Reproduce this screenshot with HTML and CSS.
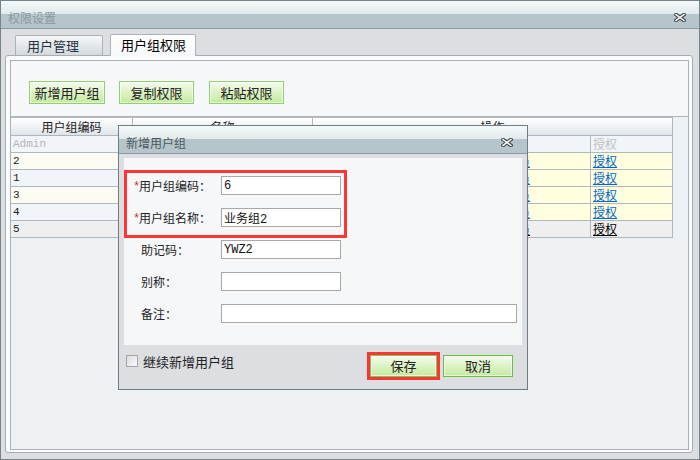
FILE: index.html
```html
<!DOCTYPE html>
<html lang="zh-CN">
<head>
<meta charset="utf-8">
<title>权限设置</title>
<link rel="stylesheet" href="styles.css">
</head>
<body>
<div class="window">
  <div class="titlebar">
    <span class="title">权限设置</span>
    <svg class="close" width="12" height="9" viewBox="0 0 12 9"><path d="M2 1.5 L10 7.5 M10 1.5 L2 7.5" stroke="#3e474b" stroke-width="3.6" stroke-linecap="square"/><path d="M2 1.5 L10 7.5 M10 1.5 L2 7.5" stroke="#ffffff" stroke-width="1.5" stroke-linecap="square"/></svg>
  </div>
  <div class="tabs">
    <div class="tab">用户管理</div>
    <div class="tab active">用户组权限</div>
  </div>
  <div class="panel">
    <div class="inner">
      <div class="toolbar">
        <div class="btn b1">新增用户组</div>
        <div class="btn b2">复制权限</div>
        <div class="btn b3">粘贴权限</div>
      </div>
      <div class="grid">
        <div class="hd">用户组编码</div>
        <div class="hd">名称</div>
        <div class="hd span2">操作</div>

        <div class="c code blue dim">Admin</div>
        <div class="c blue"></div>
        <div class="c blue"></div>
        <div class="c blue"><span class="dimlink">授权</span></div>

        <div class="c code cream">2</div>
        <div class="c yel"></div>
        <div class="c yel op"><a class="lk">成员</a></div>
        <div class="c yel"><a class="lk">授权</a></div>

        <div class="c code blue">1</div>
        <div class="c yel"></div>
        <div class="c yel op"><a class="lk">成员</a></div>
        <div class="c yel"><a class="lk">授权</a></div>

        <div class="c code cream">3</div>
        <div class="c yel"></div>
        <div class="c yel op"><a class="lk">成员</a></div>
        <div class="c yel"><a class="lk">授权</a></div>

        <div class="c code blue">4</div>
        <div class="c yel"></div>
        <div class="c yel op"><a class="lk">成员</a></div>
        <div class="c yel"><a class="lk">授权</a></div>

        <div class="c code gray">5</div>
        <div class="c gray"></div>
        <div class="c gray op"><a class="lk black">成员</a></div>
        <div class="c gray"><a class="lk black">授权</a></div>
      </div>
    </div>
  </div>

  <div class="dialog">
    <div class="dtitle">
      <span class="dtext">新增用户组</span>
      <svg class="close" width="12" height="9" viewBox="0 0 12 9"><path d="M2 1.5 L10 7.5 M10 1.5 L2 7.5" stroke="#3e474b" stroke-width="3.6" stroke-linecap="square"/><path d="M2 1.5 L10 7.5 M10 1.5 L2 7.5" stroke="#ffffff" stroke-width="1.5" stroke-linecap="square"/></svg>
    </div>
    <div class="dbody">
      <div class="form">
        <div class="redbox">
          <div class="row req"><span class="star">*</span><span class="lbl">用户组编码：</span><input class="ipt" value="6"></div>
          <div class="row req"><span class="star">*</span><span class="lbl">用户组名称：</span><input class="ipt" value="业务组2"></div>
        </div>
        <div class="row plain first"><span class="lbl">助记码：</span><input class="ipt" value="YWZ2"></div>
        <div class="row plain"><span class="lbl">别称：</span><input class="ipt" value=""></div>
        <div class="row plain"><span class="lbl">备注：</span><input class="ipt wide" value=""></div>
      </div>
      <div class="footer">
        <div class="chk"><span class="box"></span><span>继续新增用户组</span></div>
        <div class="redframe"><div class="btn dbtn">保存</div></div>
        <div class="btn dbtn cancel">取消</div>
      </div>
    </div>
  </div>
</div>
</body>
</html>
```

FILE: styles.css
```css
* { box-sizing: border-box; }
html, body { margin: 0; padding: 0; background: #dcdee2; }
body { width: 700px; height: 460px; overflow: hidden;
  font-family: "Noto Sans CJK SC", "Liberation Sans", sans-serif; font-size: 12px; color: #222; }

.window { position: relative; width: 700px; height: 460px; border: 1px solid #748489;
  background: #dcdee2; display: flex; flex-direction: column; }

.titlebar { height: 28px; flex: none; display: flex; align-items: center; justify-content: space-between;
  padding: 6px 13px 0 7px; border-bottom: 1px solid #8a9ba0;
  background: linear-gradient(#f6f9fa 0%, #e0e9ec 48%, #b5c5cb 50%, #b5c5cb 100%); }
.title { color: #8b989c; font-size: 12px; line-height: 14px; }
.close { display: block; }

.tabs { height: 26px; flex: none; display: flex; align-items: flex-end; padding-left: 14px; }
.tab { height: 20px; width: 88px; border: 1px solid #a9b3b8; border-bottom: none; border-radius: 2px 2px 0 0;
  padding: 0 11px; line-height: 19px; font-size: 13px; color: #1f3344; white-space: nowrap;
  background: linear-gradient(#f5f7f8, #d3d9dd); }
.tab.active { height: 22px; width: 86px; margin-left: 7px; margin-bottom: -1px; padding: 0 0 0 10px;
  line-height: 20px; color: #000; background: linear-gradient(#ffffff, #f7f8fa); position: relative; z-index: 1; }

.panel { margin-left: 4px; width: 688px; height: 398px; flex: none; border: 1px solid #a5aeb3; border-radius: 3px;
  background: #fafbfc; padding: 4px 3px 2px 4px; }
.inner { height: 100%; border: 1px solid #a9b1b7; background: #eef1f4; display: flex; flex-direction: column; }

.toolbar { height: 56px; flex: none; background: #f6f7f9; border-bottom: 1px solid #adb5bb;
  display: flex; align-items: flex-start; padding: 20px 0 0 18px; }
.btn { height: 23px; border: 1px solid #92cf6e; text-align: center; line-height: 21px; font-size: 13px; color: #222;
  white-space: nowrap; background: linear-gradient(#f4fbec, #c4ea9e); box-shadow: inset 0 0 0 1px rgba(255,255,255,0.55); }
.b1 { width: 76px; }
.b2 { width: 75px; margin-left: 14px; }
.b3 { width: 75px; margin-left: 15px; }

.grid { display: grid; grid-template-columns: 122px 180px 278px 82px; width: 662px; }
.hd { height: 19px; border-top: 1px solid #b3bac1; border-bottom: 1px solid #adb5bd; border-right: 1px solid #adb5bd;
  background: linear-gradient(#ffffff, #e0e4e8); text-align: center; line-height: 17px; font-size: 12px; color: #222; }
.span2 { grid-column: span 2; }
.c { height: 17px; border-right: 1px solid #b0b8bf; border-bottom: 1px solid #b0b8bf; padding-left: 2px;
  line-height: 16px; white-space: nowrap; overflow: hidden; }
.c.op { text-align: right; padding-right: 60px; }
.c.code { font-family: "Liberation Mono", monospace; font-size: 11px; color: #222; }
.c.dim { color: #b4b4b4; }
.blue { background: #f1f4f9; }
.cream { background: #fbfbf1; }
.yel { background: #ffffe0; }
.gray { background: #efefef; }
.lk { color: #0066cc; text-decoration: underline; cursor: pointer; }
.lk.black { color: #000; }
.dimlink { color: #c2c2c2; }

.dialog { position: absolute; left: 117px; top: 124px; width: 410px; height: 265px; border: 1px solid #6c7d83;
  background: #dcdee2; display: flex; flex-direction: column; z-index: 5; }
.dtitle { height: 28px; flex: none; display: flex; align-items: center; justify-content: space-between;
  padding: 6px 14px 0 7px; border-bottom: 1px solid #8a9ba0;
  background: linear-gradient(#f6f9fa 0%, #e0e9ec 48%, #b5c5cb 50%, #b5c5cb 100%); }
.dtext { color: #4e585c; font-size: 12px; line-height: 14px; }
.dbody { flex: 1; padding: 4px 5px 0; display: flex; flex-direction: column; }
.form { height: 187px; flex: none; background: #f6f7f9; padding-top: 12px; }
.redbox { width: 223px; border: 3px solid #ff3535; padding: 3px 0 8px 6px; display: flex; flex-direction: column; gap: 13px; }
.row { display: flex; align-items: center; height: 19px; }
.star { width: 6px; color: #e51c1c; font-family: "Liberation Mono", monospace; font-size: 12px; line-height: 12px; margin-top: 2px; }
.row.req .lbl { width: 82px; }
.row.plain { padding-left: 17px; margin-top: 13px; }
.row.plain.first { margin-top: 2px; }
.row.plain .lbl { width: 80px; }
.lbl { font-size: 12px; color: #222; }
.ipt { width: 120px; height: 19px; border: 1px solid #a9a9a9; background: #fff; padding: 0 2px; margin: 0;
  font-family: "Liberation Mono", "Noto Sans CJK SC", monospace; font-size: 12px; color: #111; outline: none; }
.ipt.wide { width: 296px; }

.footer { flex: 1; display: flex; align-items: flex-start; padding: 7px 9px 0 2px; }
.chk { display: flex; align-items: center; margin-top: 3px; font-size: 13px; color: #222; height: 12px; }
.box { width: 12px; height: 12px; border: 1px solid #a4a4a4; background: linear-gradient(135deg, #dcdcdc, #fafafa); margin-right: 5px; }
.redframe { margin-left: auto; border: 3px solid #ff3535; width: 73px; height: 28px; }
.dbtn { width: 67px; height: 22px; line-height: 20px; border-color: #7cc656; }
.cancel { width: 70px; margin-left: 3px; margin-top: 3px; border-color: #6dbd45; }
```
